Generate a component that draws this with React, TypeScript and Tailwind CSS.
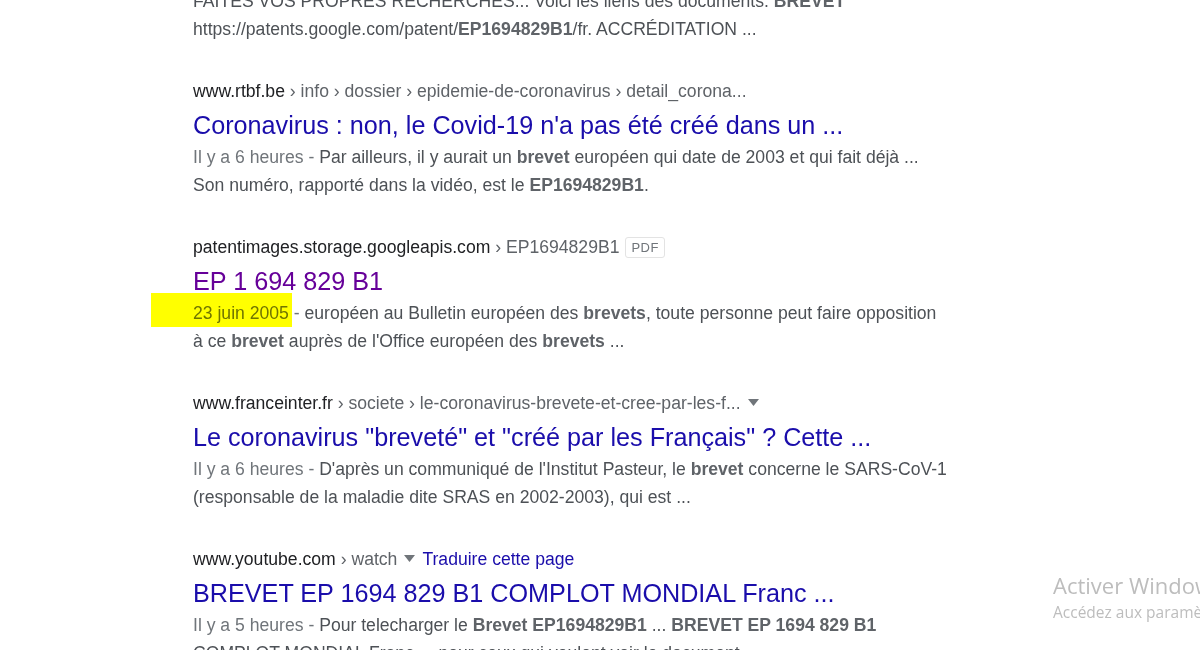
import React from "react";

const Caret = () => (
  <svg width="11" height="7" viewBox="0 0 11 7" className="inline-block mx-[7px] mb-[3px]">
    <polygon points="0,0 11,0 5.5,7" fill="#70757a" />
  </svg>
);

const Sep = () => <span className="text-[#5f6368]"> › </span>;

export default function App() {
  return (
    <div
      className="relative w-[1200px] h-[650px] overflow-hidden bg-white"
      style={{ fontFamily: '"Liberation Sans", Arial, sans-serif' }}
    >
      <div className="pl-[193px] mt-[-13px]">
        {/* previous result tail */}
        <div className="text-[17.6px] leading-[28px] text-[#4d5156] mb-[34px]">
          <div className="whitespace-nowrap">
            FAITES VOS PROPRES RECHERCHES... Voici les liens des documents. <b className="text-[#5f6368]">BREVET</b>
          </div>
          <div>
            https://patents.google.com/patent/<b className="text-[#5f6368]">EP1694829B1</b>/fr. ACCRÉDITATION ...
          </div>
        </div>

        {/* rtbf */}
        <div className="mb-[34px]">
          <div className="text-[17.6px] leading-[28px] text-[#202124] whitespace-nowrap">
            www.rtbf.be
            <span className="text-[#5f6368]">
              <Sep />info<Sep />dossier<Sep />epidemie-de-coronavirus<Sep />detail_corona...
            </span>
          </div>
          <div className="mt-[3px] text-[25.2px] leading-[34px] text-[#1a0dab] whitespace-nowrap">
            Coronavirus : non, le Covid-19 n'a pas été créé dans un ...
          </div>
          <div className="mt-[1px] text-[17.6px] leading-[28px] text-[#4d5156]">
            <div className="whitespace-nowrap">
              <span className="text-[#70757a]">Il y a 6 heures - </span>Par ailleurs, il y aurait un{" "}
              <b className="text-[#5f6368]">brevet</b> européen qui date de 2003 et qui fait déjà ...
            </div>
            <div className="whitespace-nowrap">
              Son numéro, rapporté dans la vidéo, est le <b className="text-[#5f6368]">EP1694829B1</b>.
            </div>
          </div>
        </div>

        {/* patentimages */}
        <div className="mb-[34px]">
          <div className="flex items-center text-[17.6px] leading-[28px] text-[#202124] whitespace-nowrap">
            <span>
              patentimages.storage.googleapis.com
              <span className="text-[#5f6368]">
                <Sep />EP1694829B1
              </span>
            </span>
            <span className="ml-[6px] border border-[#e3e3e3] rounded-[3px] px-[5px] text-[13px] leading-[19px] tracking-[0.5px] text-[#70757a]">
              PDF
            </span>
          </div>
          <div className="mt-[3px] text-[25.2px] leading-[34px] text-[#660099] whitespace-nowrap">EP 1 694 829 B1</div>
          <div className="mt-[1px] text-[17.6px] leading-[28px] text-[#4d5156]">
            <div className="whitespace-nowrap">
              <span className="relative inline-block leading-[28px] text-[#70757a]">
                <span className="absolute left-[-42px] right-[-3px] top-[-6px] bottom-0 bg-[#ffff00] mix-blend-multiply" />
                23 juin 2005
              </span>
              <span className="text-[#70757a]"> - </span>européen au Bulletin européen des{" "}
              <b className="text-[#5f6368]">brevets</b>, toute personne peut faire opposition
            </div>
            <div className="whitespace-nowrap">
              à ce <b className="text-[#5f6368]">brevet</b> auprès de l'Office européen des{" "}
              <b className="text-[#5f6368]">brevets</b> ...
            </div>
          </div>
        </div>

        {/* franceinter */}
        <div className="mb-[34px]">
          <div className="text-[17.6px] leading-[28px] text-[#202124] whitespace-nowrap">
            www.franceinter.fr
            <span className="text-[#5f6368]">
              <Sep />societe<Sep />le-coronavirus-brevete-et-cree-par-les-f...
            </span>
            <Caret />
          </div>
          <div className="mt-[3px] text-[25.2px] leading-[34px] text-[#1a0dab] whitespace-nowrap">
            Le coronavirus "breveté" et "créé par les Français" ? Cette ...
          </div>
          <div className="mt-[1px] text-[17.6px] leading-[28px] text-[#4d5156]">
            <div className="whitespace-nowrap">
              <span className="text-[#70757a]">Il y a 6 heures - </span>D'après un communiqué de l'Institut Pasteur, le{" "}
              <b className="text-[#5f6368]">brevet</b> concerne le SARS-CoV-1
            </div>
            <div className="whitespace-nowrap">(responsable de la maladie dite SRAS en 2002-2003), qui est ...</div>
          </div>
        </div>

        {/* youtube */}
        <div className="mb-[34px]">
          <div className="text-[17.6px] leading-[28px] text-[#202124] whitespace-nowrap">
            www.youtube.com
            <span className="text-[#5f6368]">
              <Sep />watch
            </span>
            <Caret />
            <span className="text-[#1a0dab]">Traduire cette page</span>
          </div>
          <div className="mt-[3px] text-[25.2px] leading-[34px] text-[#1a0dab] whitespace-nowrap">
            BREVET EP 1694 829 B1 COMPLOT MONDIAL Franc ...
          </div>
          <div className="mt-[1px] text-[17.6px] leading-[28px] text-[#4d5156]">
            <div className="whitespace-nowrap">
              <span className="text-[#70757a]">Il y a 5 heures - </span>Pour telecharger le{" "}
              <b className="text-[#5f6368]">Brevet EP1694829B1</b> ... <b className="text-[#5f6368]">BREVET EP 1694 829 B1</b>
            </div>
            <div className="whitespace-nowrap">
              COMPLOT MONDIAL Franc ... pour ceux qui veulent voir le document ...
            </div>
          </div>
        </div>
      </div>

      {/* Windows activation watermark */}
      <div
        className="absolute left-[1053px] top-[570px] whitespace-nowrap text-[#bdbdbd]"
        style={{ fontFamily: '"Open Sans", "Noto Sans", sans-serif' }}
      >
        <div className="text-[22px] leading-[30px]">Activer Windows</div>
        <div className="text-[15.5px] leading-[22px] mt-[1px]">Accédez aux paramètres pour activer Windows.</div>
      </div>
    </div>
  );
}
